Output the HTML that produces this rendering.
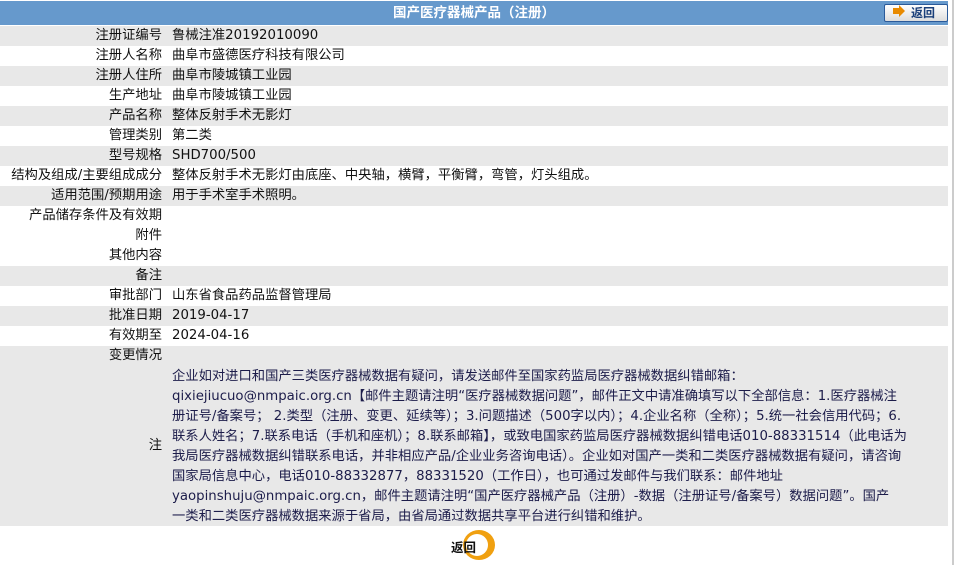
<!DOCTYPE html>
<html><head><meta charset="utf-8"><style>
body{margin:0;width:954px;height:565px;background:#fff;font-family:"DejaVu Sans","Noto Sans CJK SC",sans-serif;font-size:13.3px;color:#111;position:relative;overflow:hidden}
.hd{position:absolute;left:0;top:1px;width:948px;height:24px;background:#6699cc;color:#fff;font-weight:bold;text-align:center;line-height:24px;font-size:13.5px}
.btn{position:absolute;left:884px;top:4px;width:62px;height:16px;border:1px solid #2a5a9a;border-radius:2px;background:linear-gradient(#fff,#ddd);color:#1a3f7a;font-weight:bold;font-size:12px;line-height:16px}
.btn i{position:absolute;left:8px;top:3px;width:6px;height:6px;background:#e88a00;font-style:normal}
.btn i:after{content:"";position:absolute;left:6px;top:-3px;border-left:6px solid #e88a00;border-top:6px solid transparent;border-bottom:6px solid transparent}
.btn span{position:absolute;left:26px;top:0}
.r{position:absolute;left:0;width:948px;height:20px;line-height:20px}
.g{background:#e8e8e8}
.l{position:absolute;right:786px;white-space:nowrap}
.v{position:absolute;left:172px;white-space:nowrap}
.note{position:absolute;left:0;top:366px;width:948px;height:160px;background:#e8e8e8}
.nt{position:absolute;left:172px;top:1px;line-height:20px;color:#1c1c4a;white-space:nowrap}
.sb{position:absolute;left:952px;top:0;width:2px;height:565px;background:#ccc}
.bk{position:absolute;left:451px;top:537px;font-weight:bold;font-size:12.5px}
.ring{position:absolute;left:463px;top:530px;width:32px;height:30px;border-radius:50%;background:#f0a010}
.ring:after{content:"";position:absolute;left:3px;top:4px;width:22px;height:22px;border-radius:50%;background:#fff}
</style></head><body>
<div class="hd">国产医疗器械产品（注册）</div>
<div class="btn"><i></i><span>返回</span></div>
<div class="r g" style="top:26px"><span class="l">注册证编号</span><span class="v">鲁械注准20192010090</span></div>
<div class="r" style="top:46px"><span class="l">注册人名称</span><span class="v">曲阜市盛德医疗科技有限公司</span></div>
<div class="r g" style="top:66px"><span class="l">注册人住所</span><span class="v">曲阜市陵城镇工业园</span></div>
<div class="r" style="top:86px"><span class="l">生产地址</span><span class="v">曲阜市陵城镇工业园</span></div>
<div class="r g" style="top:106px"><span class="l">产品名称</span><span class="v">整体反射手术无影灯</span></div>
<div class="r" style="top:126px"><span class="l">管理类别</span><span class="v">第二类</span></div>
<div class="r g" style="top:146px"><span class="l">型号规格</span><span class="v">SHD700/500</span></div>
<div class="r" style="top:166px"><span class="l">结构及组成/主要组成成分</span><span class="v">整体反射手术无影灯由底座、中央轴，横臂，平衡臂，弯管，灯头组成。</span></div>
<div class="r g" style="top:186px"><span class="l">适用范围/预期用途</span><span class="v">用于手术室手术照明。</span></div>
<div class="r" style="top:206px"><span class="l">产品储存条件及有效期</span></div>
<div class="r" style="top:226px"><span class="l">附件</span></div>
<div class="r" style="top:246px"><span class="l">其他内容</span></div>
<div class="r g" style="top:266px"><span class="l">备注</span></div>
<div class="r" style="top:286px"><span class="l">审批部门</span><span class="v">山东省食品药品监督管理局</span></div>
<div class="r g" style="top:306px"><span class="l">批准日期</span><span class="v">2019-04-17</span></div>
<div class="r" style="top:326px"><span class="l">有效期至</span><span class="v">2024-04-16</span></div>
<div class="r g" style="top:346px"><span class="l">变更情况</span></div>
<div class="note"><span class="l" style="top:70px;line-height:20px">注</span>
<div class="nt">企业如对进口和国产三类医疗器械数据有疑问，请发送邮件至国家药监局医疗器械数据纠错邮箱：<br>qixiejiucuo@nmpaic.org.cn【邮件主题请注明“医疗器械数据问题”，邮件正文中请准确填写以下全部信息：1.医疗器械注<br>册证号/备案号； 2.类型（注册、变更、延续等）；3.问题描述（500字以内）；4.企业名称（全称）；5.统一社会信用代码；6.<br>联系人姓名；7.联系电话（手机和座机）；8.联系邮箱】，或致电国家药监局医疗器械数据纠错电话010-88331514（此电话为<br>我局医疗器械数据纠错联系电话，并非相应产品/企业业务咨询电话）。企业如对国产一类和二类医疗器械数据有疑问，请咨询<br>国家局信息中心，电话010-88332877，88331520（工作日），也可通过发邮件与我们联系：邮件地址<br>yaopinshuju@nmpaic.org.cn，邮件主题请注明“国产医疗器械产品（注册）-数据（注册证号/备案号）数据问题”。国产<br>一类和二类医疗器械数据来源于省局，由省局通过数据共享平台进行纠错和维护。</div></div>
<div class="ring"></div>
<div class="bk">返回</div>
<div class="sb"></div>
</body></html>
